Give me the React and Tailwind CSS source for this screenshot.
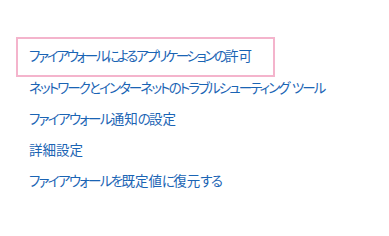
// Meiryo UI style: kana are narrower than kanji, so squeeze the kana runs
function LinkText({ text, squeeze = "tracking-[-1.7px]" }) {
  const parts = text.split(/([\u3040-\u30ff]+)/).filter(Boolean);
  return parts.map((p, i) =>
    /[\u3040-\u30ff]/.test(p) ? (
      <span key={i} className={squeeze}>{p}</span>
    ) : (
      <span key={i} className="whitespace-pre">{p}</span>
    )
  );
}

export default function App() {
  const links = [
    { label: "ネットワークとインターネットのトラブルシューティング ツール", squeeze: "tracking-[-1.9px]" },
    { label: "ファイアウォール通知の設定", squeeze: "tracking-[-1.7px]" },
    { label: "詳細設定", squeeze: "tracking-[-1.7px]" },
    { label: "ファイアウォールを既定値に復元する", squeeze: "tracking-[-1.7px]" },
  ];

  return (
    <div
      className="w-[389px] h-[236px] bg-white pt-[37px] pl-[16px] overflow-hidden"
      style={{ fontFamily: '"Noto Sans CJK JP", "Noto Sans", sans-serif', fontFeatureSettings: '"palt"' }}
    >
      <div className="w-[259px] h-[40px] border-2 border-[#f4b4cc] pl-[11px] pt-[6px]">
        <a className="block text-[13.5px] leading-5 text-[#1a64b4] whitespace-nowrap">
          <LinkText text="ファイアウォールによるアプリケーションの許可" squeeze="tracking-[-2.25px]" />
        </a>
      </div>
      <nav className="flex flex-col gap-[11px] pl-[13px]">
        {links.map((l) => (
          <a key={l.label} className="block text-[13.5px] leading-5 text-[#1a64b4] whitespace-nowrap">
            <LinkText text={l.label} squeeze={l.squeeze} />
          </a>
        ))}
      </nav>
    </div>
  );
}
